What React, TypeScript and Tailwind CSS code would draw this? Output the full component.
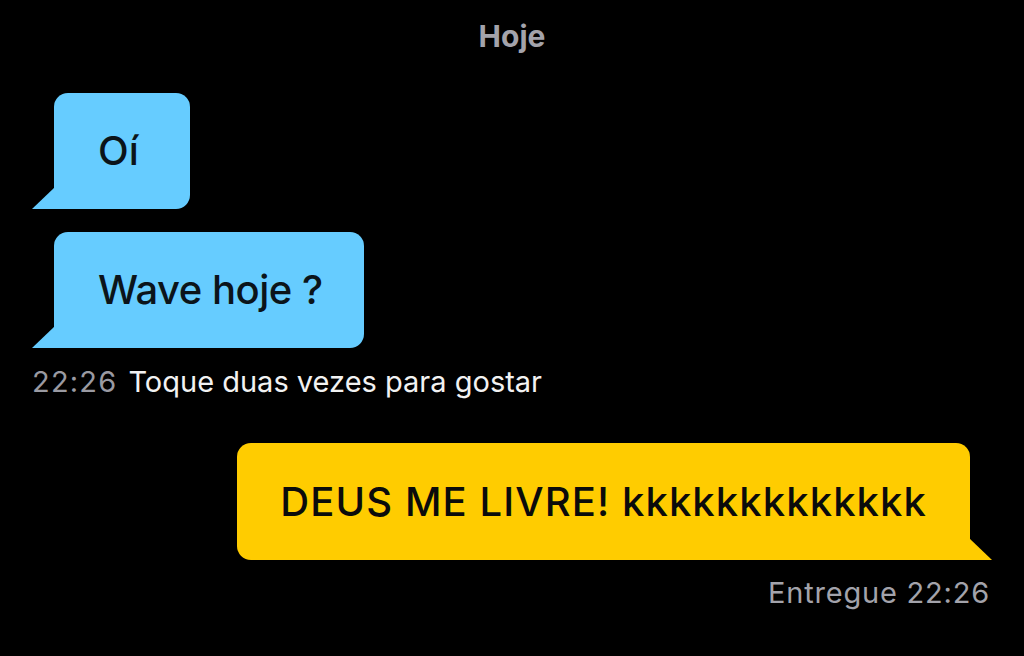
import React from "react";

const font = { fontFamily: '"Inter", "Noto Sans", sans-serif' };

function LeftBubble({ text, extra }: { text: string; extra: string }) {
  return (
    <div className="relative ml-[22px] self-start">
      <div
        className={`flex h-[116px] items-center rounded-[14px] rounded-bl-none bg-[#66ccff] pl-[44px] text-[40px] font-medium text-[#0b141a] ${extra}`}
      >
        {text}
      </div>
      <svg className="absolute bottom-0 left-[-22px]" width="23" height="22" viewBox="0 0 23 22">
        <path d="M23 0 L23 22 L0 22 Z" fill="#66ccff" />
      </svg>
    </div>
  );
}

function RightBubble({ text }: { text: string }) {
  return (
    <div className="relative mr-[22px] self-end">
      <div className="flex h-[117px] items-center rounded-[14px] rounded-br-none bg-[#ffcc00] px-[43px] text-[40px] font-medium tracking-[1.1px] text-[#0b0b0b]">
        {text}
      </div>
      <svg className="absolute bottom-0 right-[-22px]" width="23" height="22" viewBox="0 0 23 22">
        <path d="M0 0 L0 22 L23 22 Z" fill="#ffcc00" />
      </svg>
    </div>
  );
}

export default function App() {
  return (
    <div className="flex h-[656px] w-[1024px] flex-col bg-black px-[32px]" style={font}>
      <div className="pt-[18px] text-center text-[30px] font-bold leading-[36px] text-[#a3a3ab]">Hoje</div>
      <div className="mt-[39px] flex flex-col gap-[23px]">
        <LeftBubble text="Oí" extra="pr-[51px]" />
        <LeftBubble text="Wave hoje ?" extra="pr-[41px] tracking-[-0.5px]" />
      </div>
      <div className="mt-[17px] flex gap-[11px] text-[29px] leading-[34px]">
        <span className="tracking-[1.2px] text-[#9a9aa2]">22:26</span>
        <span className="text-[#f2f2f2]">Toque duas vezes para gostar</span>
      </div>
      <div className="mt-[44px] flex flex-col">
        <RightBubble text="DEUS ME LIVRE! kkkkkkkkkkkkk" />
      </div>
      <div className="mt-[16px] self-end pr-[2px] text-[29px] leading-[34px] tracking-[0.8px] text-[#a3a3ab]">
        Entregue 22:26
      </div>
    </div>
  );
}
